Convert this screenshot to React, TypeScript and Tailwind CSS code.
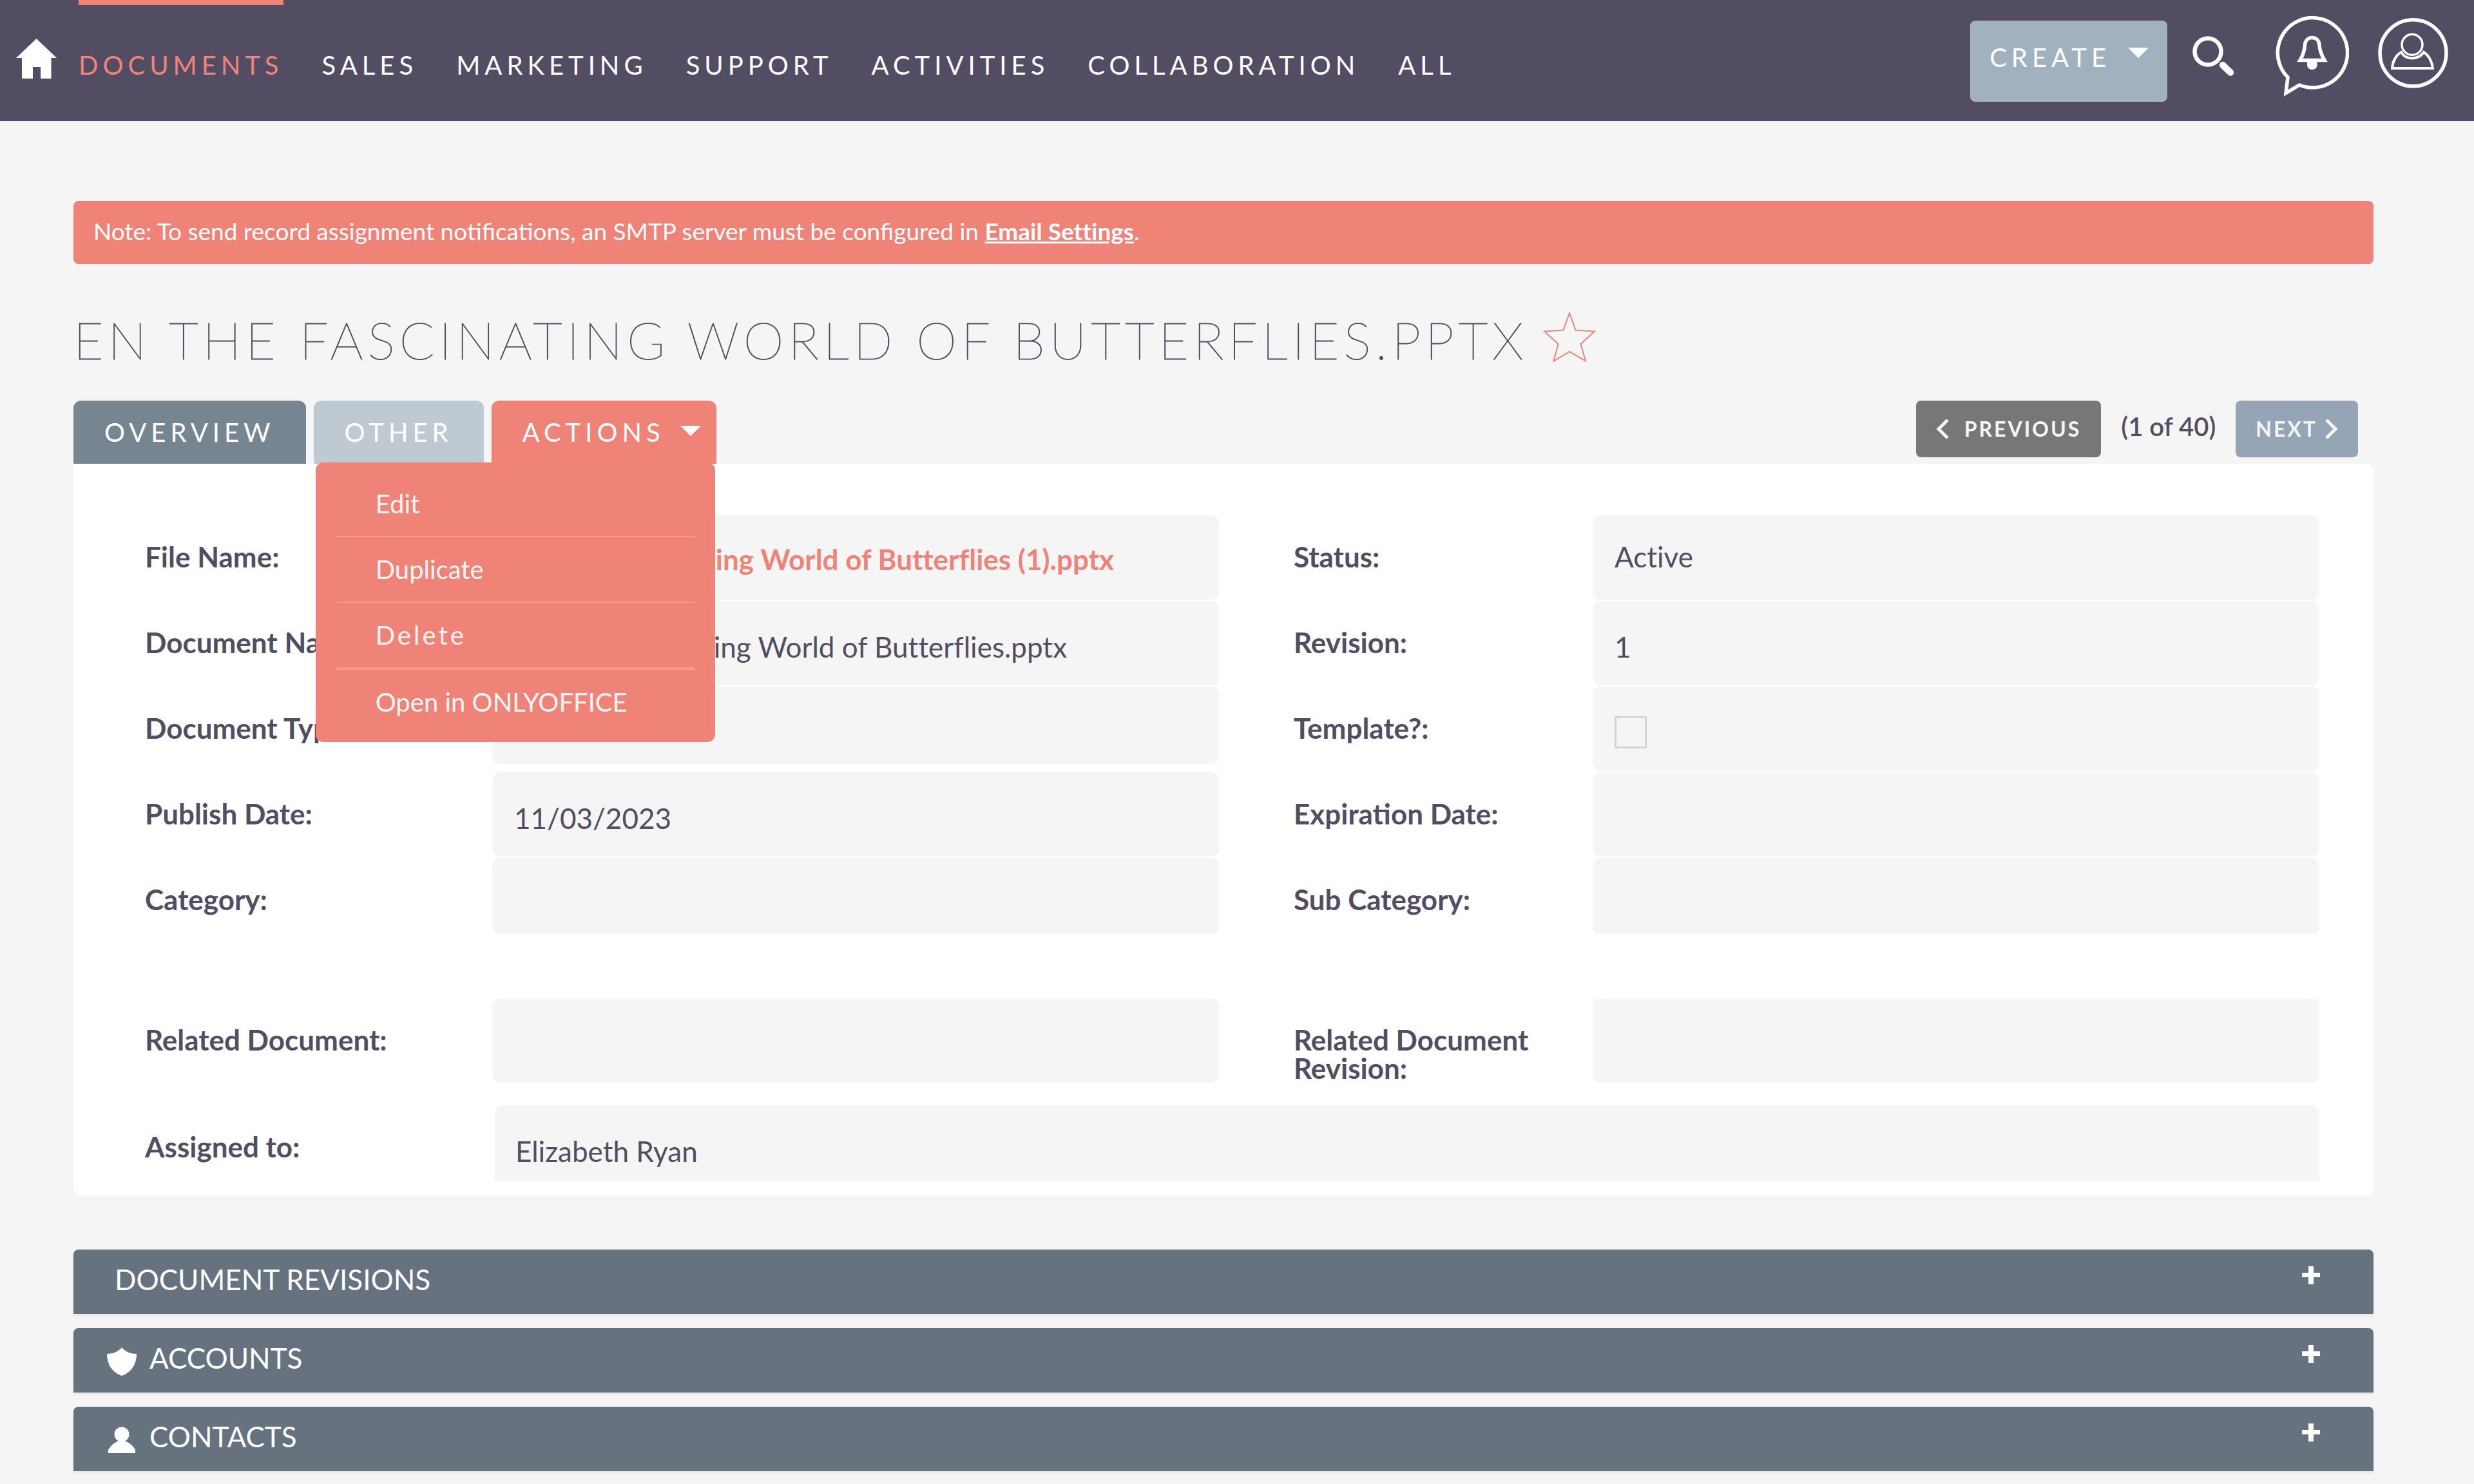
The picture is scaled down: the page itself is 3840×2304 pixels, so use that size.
import type { ReactNode } from "react";

const NAV = ["Documents", "Sales", "Marketing", "Support", "Activities", "Collaboration", "All"];

function HomeIcon() {
  return (
    <svg viewBox="0 0 63 62" className="h-[62px] w-[63px]" fill="white" aria-hidden="true">
      <path d="M31.500 0 63 30H54.500V62H38V44H26V62H9V30H0Z" />
    </svg>
  );
}

function Caret() {
  return (
    <svg viewBox="0 0 32 16" className="h-4 w-8" fill="white" aria-hidden="true">
      <path d="M0 0H32L16 16Z" />
    </svg>
  );
}

function SearchIcon() {
  return (
    <svg viewBox="0 0 65 126" className="h-[126px] w-[65px]" fill="none" stroke="white" aria-hidden="true">
      <circle cx="24" cy="56" r="20.500" strokeWidth="6.500" />
      <path d="M47 77 59 88.500" strokeWidth="10.500" strokeLinecap="round" />
    </svg>
  );
}

function BellIcon() {
  return (
    <svg viewBox="0 0 115 126" className="h-[126px] w-[115px]" fill="none" stroke="white" aria-hidden="true">
      <path d="M20 96A54.200 54.200 0 1 1 38 108L17 120.500Z" strokeWidth="5.500" />
      <path d="M39 69.500C44 61 46 55 46.500 46C47 38 52 34.500 57.700 34.500S68.500 38 69 46C69.500 55 72 61 77 69.500Z" strokeWidth="5.500" />
      <rect x="50" y="70" width="15.500" height="14" rx="7" fill="white" stroke="none" />
      <rect x="50" y="70" width="15.500" height="7" fill="white" stroke="none" />
    </svg>
  );
}

function UserIcon() {
  return (
    <svg viewBox="0 0 109 126" className="h-[126px] w-[109px]" fill="none" stroke="white" aria-hidden="true">
      <circle cx="54.500" cy="58.300" r="51.500" strokeWidth="5.500" />
      <circle cx="53" cy="45.300" r="16" strokeWidth="3.500" />
      <path d="M22 82C22.500 72 28 61 36 57C40 64 46 66.500 53 66.500S66 64 71 57C79 62 84 72 85 82Z" strokeWidth="4" />
    </svg>
  );
}

function StarIcon() {
  return (
    <svg viewBox="0 0 82 78" className="h-[78px] w-[82px]" fill="none" stroke="#f08377" strokeWidth="2" aria-hidden="true">
      <path d="M41 2 50.500 28.500 80 30.500 58.500 50 66 76.500 41 62 16.500 76.500 23.500 50 2 30.500 31.500 28.500Z" />
    </svg>
  );
}

function Chevron({ left = false }: { left?: boolean }) {
  return (
    <svg viewBox="0 0 20 32" className="h-8 w-5" fill="none" stroke="#f5f5f5" strokeWidth="5" aria-hidden="true">
      <path d={left ? "M18 2 4 16 18 30" : "M2 2 16 16 2 30"} />
    </svg>
  );
}

function ShieldIcon() {
  return (
    <svg viewBox="0 0 46 44" className="h-11 w-[46px]" fill="white" aria-hidden="true">
      <path d="M23 0C28 6 36 10 46 10C46 26 38 39 23 44C8 39 0 26 0 10C10 10 18 6 23 0Z" />
    </svg>
  );
}

function PersonIcon() {
  return (
    <svg viewBox="0 0 46 44" className="h-11 w-[46px]" fill="white" aria-hidden="true">
      <circle cx="23" cy="13" r="11.500" />
      <path d="M2 42V37C6 30 13 24 20 23H26C33 24 40 30 44 37V42Z" />
    </svg>
  );
}

function PlusIcon() {
  return (
    <svg viewBox="0 0 28 28" className="h-7 w-7" fill="white" aria-hidden="true">
      <path d="M10 0H18V10H28V17H18V28H10V17H0V10H10Z" />
    </svg>
  );
}

function Label({ children }: { children: ReactNode }) {
  return <div className="pt-[42px] pl-[3px] text-[44px] leading-[44px] font-bold">{children}</div>;
}

function Field({
  size = "h-[131px]",
  pad = "pt-[49px]",
  children,
}: {
  size?: string;
  pad?: string;
  children?: ReactNode;
}) {
  return (
    <div className={`${size} ${pad} overflow-hidden rounded-xl bg-[#f5f5f5] pl-[34px] text-[44px] leading-[44px] whitespace-nowrap [font-variant-ligatures:none]`}>
      {children}
    </div>
  );
}

const ROWS: { left: string; leftField: ReactNode; right: string; rightField: ReactNode }[] = [
  {
    left: "File Name:",
    leftField: (
      <Field pad="pt-[46px]">
        <a href="#file" className="font-bold text-[#f08377]">EN The Fascinating World of Butterflies (1).pptx</a>
      </Field>
    ),
    right: "Status:",
    rightField: <Field pad="pt-[42px]">Active</Field>,
  },
  {
    left: "Document Name:",
    leftField: <Field>EN The Fascinating World of Butterflies.pptx</Field>,
    right: "Revision:",
    rightField: <Field>1</Field>,
  },
  {
    left: "Document Type:",
    leftField: <Field size="h-[120px]" />,
    right: "Template?:",
    rightField: (
      <Field pad="pt-[46px]">
        <input
          type="checkbox"
          aria-label="Template?"
          className="block size-[50px] appearance-none border-[3px] border-[#cdd6de] bg-[#f5f5f5]"
        />
      </Field>
    ),
  },
  { left: "Publish Date:", leftField: <Field>11/03/2023</Field>, right: "Expiration Date:", rightField: <Field /> },
  {
    left: "Category:",
    leftField: <Field size="h-[118px]" />,
    right: "Sub Category:",
    rightField: <Field size="h-[118px]" />,
  },
];

const SECTIONS: { title: string; icon?: ReactNode }[] = [
  { title: "Document Revisions" },
  { title: "Accounts", icon: <ShieldIcon /> },
  { title: "Contacts", icon: <PersonIcon /> },
];

export default function App() {
  return (
    <div className="min-h-screen bg-[#f5f5f5] font-['Lato',sans-serif] text-[#534d64]">
      <header className="flex h-[188px] items-start justify-between bg-[#534d64] pr-10 pl-[25px] text-[40px] text-white uppercase">
        <div className="flex h-full items-start">
          <a href="#home" aria-label="Home" className="pt-[60px]">
            <HomeIcon />
          </a>
          <nav className="ml-[34px] flex h-full gap-[60px] tracking-[7px]">
            {NAV.map((item, i) => (
              <a
                key={item}
                href={`#${item}`}
                className={`border-t-8 pt-[69px] leading-[48px] ${i === 0 ? "border-[#f08377] text-[#f08377]" : "border-transparent"}`}
              >
                {item}
              </a>
            ))}
          </nav>
        </div>
        <div className="flex items-start">
          <button className="mt-8 flex h-[126px] items-start gap-[27px] rounded-lg bg-[#a2b1be] pt-[33px] pr-[29px] pl-[30px] leading-[48px] tracking-[7px] uppercase">
            Create
            <span className="pt-[9px]"><Caret /></span>
          </button>
          <button aria-label="Search" className="mt-6 ml-[39px]"><SearchIcon /></button>
          <button aria-label="Notifications" className="mt-6 ml-[63px]"><BellIcon /></button>
          <button aria-label="Account" className="mt-6 ml-[45px]"><UserIcon /></button>
        </div>
      </header>

      <main className="pt-[124px] pr-[156px] pl-[114px]">
        <div className="flex h-[98px] items-center rounded-lg bg-[#f08377] px-[31px] text-[37px] text-white">
          <p className="pb-1">
            Note: To send record assignment notifications, an SMTP server must be configured in{" "}
            <a href="#email" className="font-bold underline [font-variant-ligatures:none]">Email Settings</a>.
          </p>
        </div>

        <div className="mt-[69px] flex h-24 items-center gap-6">
          <h1 className="text-[80px] leading-[96px] font-thin tracking-[7px] whitespace-nowrap uppercase [-webkit-text-stroke:1px_#534d64]">
            EN The Fascinating World of Butterflies.pptx
          </h1>
          <button aria-label="Favorite" className="pb-2"><StarIcon /></button>
        </div>

        <div className="mt-[47px] flex items-start justify-between">
          <div className="flex gap-3 text-[40px] leading-[98px] tracking-[7px] text-white">
            <button className="rounded-t-xl bg-[#778591] px-12 uppercase">Overview</button>
            <button className="rounded-t-xl bg-[#bfc9d2] px-12 uppercase">Other</button>
            <div className="relative">
              <button className="flex items-center gap-6 rounded-t-xl bg-[#f08377] pr-6 pl-12 uppercase">
                Actions
                <span className="pb-1"><Caret /></span>
              </button>
              <div className="absolute top-24 right-0.5 z-10 w-[620px] rounded-xl bg-[#f08377] px-8 pt-3.5 pb-3 text-[40px] tracking-normal text-[#f5f5f5]">
                <a href="#edit" className="block border-b-2 border-[#f7998e] pl-[61px] leading-[100px]">Edit</a>
                <a href="#duplicate" className="block border-b-2 border-[#f7998e] pl-[61px] leading-[100px]">Duplicate</a>
                <a href="#delete" className="block border-b-4 border-[#f7998e] pl-[61px] leading-[100px] tracking-[4px]">Delete</a>
                <a href="#open" className="block pl-[61px] leading-[100px]">Open in ONLYOFFICE</a>
              </div>
            </div>
          </div>
          <div className="flex items-center pr-6">
            <button className="flex h-[88px] items-center gap-6 rounded-lg bg-[#777777] px-[31px] text-[32px] font-bold tracking-[3px] text-[#f5f5f5]">
              <Chevron left />
              PREVIOUS
            </button>
            <span className="px-[31px] pb-2 text-[40px] font-semibold">(1 of 40)</span>
            <button className="flex h-[88px] items-center gap-3 rounded-lg bg-[#95a5b5] px-[31px] text-[32px] font-bold tracking-[3px] text-[#f5f5f5]">
              NEXT
              <Chevron />
            </button>
          </div>
        </div>

        <section className="rounded-xl rounded-tl-none bg-white pt-20 pr-[84px] pb-[22px] pl-[108px]">
          {ROWS.map((row) => (
            <div key={row.left} className="grid h-[133px] grid-cols-[542px_1fr_113px_467px_1fr] items-start">
              <Label>{row.left}</Label>
              {row.leftField}
              <span />
              <Label>{row.right}</Label>
              {row.rightField}
            </div>
          ))}
          <div className="mt-[85px] grid h-[166px] grid-cols-[542px_1fr_113px_467px_1fr] items-start">
            <Label>Related Document:</Label>
            <Field />
            <span />
            <Label>Related Document Revision:</Label>
            <Field />
          </div>
          <div className="grid grid-cols-[546px_1fr] items-start">
            <Label>Assigned to:</Label>
            <div className="h-[118px] rounded-t-xl bg-[#f5f5f5] pt-[49px] pl-8 text-[44px] leading-[44px]">Elizabeth Ryan</div>
          </div>
        </section>

        <div className="mt-[84px] flex flex-col gap-[22px] pb-5">
          {SECTIONS.map((s) => (
            <button
              key={s.title}
              className="flex h-[100px] items-start justify-between rounded-t-lg bg-[#66727e] pr-[83px] text-[44px] text-white uppercase shadow-[0_4px_2px_rgba(0,0,0,0.04)]"
            >
              <span className={`flex items-start gap-5 ${s.icon ? "pl-[52px]" : "pl-16"}`}>
                {s.icon && <span className="pt-[30px]">{s.icon}</span>}
                <span className="pt-5 leading-[52px]">{s.title}</span>
              </span>
              <span className="pt-[26px]"><PlusIcon /></span>
            </button>
          ))}
        </div>
      </main>
    </div>
  );
}
